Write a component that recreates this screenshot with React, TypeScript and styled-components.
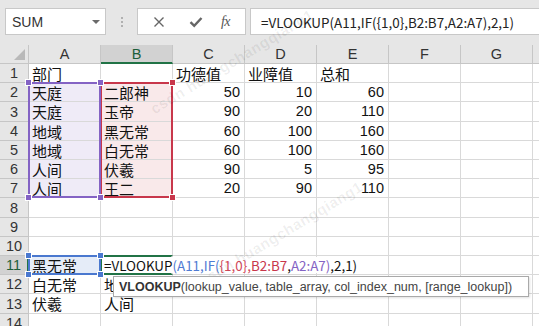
import React from 'react';
import styled, { createGlobalStyle } from 'styled-components';

const GlobalStyle = createGlobalStyle`
  html, body {
    margin: 0;
    padding: 0;
    background: #fff;
  }
  body {
    font-family: "Liberation Sans", "Noto Sans CJK SC", sans-serif;
    color: #111;
  }
`;

const GREEN = '#217346';
const BLUE = '#4a78cf';
const RED = '#c8374b';
const PURPLE = '#8463c4';

const FORMULA = '=VLOOKUP(A11,IF({1,0},B2:B7,A2:A7),2,1)';

const COLS = ['A', 'B', 'C', 'D', 'E', 'F', 'G', 'H'];
const ROW_COUNT = 14;
// rows are 19.2px apart in the shot, snap them to whole pixels
const rowHeights = Array.from(
  { length: ROW_COUNT },
  (_, i) => Math.round((i + 1) * 19.2) - Math.round(i * 19.2)
);

type CellValue = string | number | null;

const data: Record<number, CellValue[]> = {
  1: ['部门', null, '功德值', '业障值', '总和'],
  2: ['天庭', '二郎神', 50, 10, 60],
  3: ['天庭', '玉帝', 90, 20, 110],
  4: ['地域', '黑无常', 60, 100, 160],
  5: ['地域', '白无常', 60, 100, 160],
  6: ['人间', '伏羲', 90, 5, 95],
  7: ['人间', '王二', 20, 90, 110],
  11: ['黑无常'],
  12: ['白无常', '地域'],
  13: ['伏羲', '人间'],
};

const formulaParts: [string, string][] = [
  ['=VLOOKUP', '#111'],
  ['(A11,IF(', '#4f7bd3'],
  ['{1,0},', '#d2485a'],
  ['B2:B7', RED],
  [',', '#111'],
  ['A2:A7)', PURPLE],
  [',2,1)', '#111'],
];

const Page = styled.div`
  position: relative;
  width: 539px;
  height: 326px;
  overflow: hidden;
`;

/* ---------- formula bar ---------- */

const FormulaBar = styled.div`
  height: 45px;
  box-sizing: border-box;
  background: #e6e6e6;
  display: flex;
  align-items: flex-start;
  padding: 8px 0 0 5px;
`;

const NameBox = styled.div`
  width: 101px;
  height: 27px;
  box-sizing: border-box;
  background: #fff;
  border: 1px solid #c8c8c8;
  display: flex;
  align-items: center;
  justify-content: space-between;
  padding: 0 5px 0 6px;
  font-size: 14px;
  color: #333;
`;

const DropArrow = styled.span`
  width: 0;
  height: 0;
  border-left: 4px solid transparent;
  border-right: 4px solid transparent;
  border-top: 4px solid #6a6a6a;
`;

const Grip = styled.div`
  width: 31px;
  height: 27px;
  display: flex;
  flex-direction: column;
  align-items: center;
  justify-content: center;
  gap: 2px;

  span {
    width: 2px;
    height: 2px;
    background: #b0b0b0;
  }
`;

const ButtonGroup = styled.div`
  width: 109px;
  height: 27px;
  box-sizing: border-box;
  background: #fff;
  border: 1px solid #c8c8c8;
  display: grid;
  grid-template-columns: 38px 36px 1fr;
  align-items: center;
  justify-items: center;
  padding-left: 2px;
`;

const FxLabel = styled.span`
  font-family: "Liberation Serif", serif;
  font-style: italic;
  font-size: 14px;
  color: #555;
  letter-spacing: -0.5px;
  margin-right: 8px;
`;

const FormulaInput = styled.div`
  flex: 1;
  height: 27px;
  margin-left: 4px;
  box-sizing: border-box;
  background: #fff;
  border: 1px solid #c8c8c8;
  border-right: none;
  display: flex;
  align-items: center;
  padding-left: 10px;
  font-family: "Noto Sans CJK SC", sans-serif;
  font-size: 13.4px;
  color: #222;
  white-space: nowrap;
`;

/* ---------- sheet ---------- */

const Sheet = styled.div<{ $rows: string }>`
  display: grid;
  grid-template-columns: 29px repeat(8, 72px);
  grid-template-rows: ${(p) => p.$rows};
`;

const Corner = styled.div`
  grid-row: 1;
  grid-column: 1;
  background: #e6e6e6;
  border-right: 1px solid #c6c6c6;
  border-bottom: 1px solid #c6c6c6;
  position: relative;

  &::after {
    content: '';
    position: absolute;
    right: 3px;
    bottom: 3px;
    border-left: 11px solid transparent;
    border-bottom: 11px solid #b9b9b9;
  }
`;

const ColHeader = styled.div<{ $col: number; $active?: boolean }>`
  grid-row: 1;
  grid-column: ${(p) => p.$col};
  background: ${(p) => (p.$active ? '#d2d2d2' : '#e6e6e6')};
  border-right: 1px solid #c6c6c6;
  border-bottom: ${(p) => (p.$active ? `2px solid ${GREEN}` : '1px solid #c6c6c6')};
  display: flex;
  align-items: center;
  justify-content: center;
  font-size: 14.5px;
  color: ${(p) => (p.$active ? '#1d5e3a' : '#333')};
`;

const RowHeader = styled.div<{ $row: number; $active?: boolean }>`
  grid-row: ${(p) => p.$row};
  grid-column: 1;
  background: ${(p) => (p.$active ? '#d2d2d2' : '#e6e6e6')};
  border-right: ${(p) => (p.$active ? `2px solid ${GREEN}` : '1px solid #c6c6c6')};
  border-bottom: 1px solid #c6c6c6;
  display: flex;
  align-items: center;
  justify-content: center;
  font-size: 14.5px;
  color: ${(p) => (p.$active ? '#1d5e3a' : '#333')};
`;

const Cell = styled.div<{ $row: number; $col: number; $num?: boolean }>`
  grid-row: ${(p) => p.$row};
  grid-column: ${(p) => p.$col};
  border-right: 1px solid #d9d9d9;
  border-bottom: 1px solid #d9d9d9;
  display: flex;
  align-items: center;
  justify-content: ${(p) => (p.$num ? 'flex-end' : 'flex-start')};
  padding: ${(p) => (p.$num ? '0 4px 0 0' : '0 0 0 3px')};
  font-family: ${(p) =>
    p.$num ? '"Liberation Sans", sans-serif' : '"Noto Sans CJK SC", sans-serif'};
  font-size: ${(p) => (p.$num ? '14.5px' : '15px')};
  line-height: 1;
  white-space: nowrap;
  min-width: 0;
`;

const RangeFill = styled.div<{ $area: string; $color: string }>`
  grid-area: ${(p) => p.$area};
  background: ${(p) => p.$color};
`;

const RangeFrame = styled.div<{ $area: string; $color: string; $open?: string }>`
  grid-area: ${(p) => p.$area};
  margin: -1px 0 0 -1px;
  border: 2px solid ${(p) => p.$color};
  ${(p) => (p.$open ? `border-${p.$open}-color: transparent;` : '')}
  position: relative;
  pointer-events: none;
`;

const Handle = styled.span<{ $color: string; $v: 'top' | 'bottom'; $h: 'left' | 'right' }>`
  position: absolute;
  ${(p) => p.$v}: -4px;
  ${(p) => p.$h}: -4px;
  width: 5px;
  height: 5px;
  background: ${(p) => p.$color};
  border: 1px solid #fff;
  box-sizing: content-box;
  margin: -1px;
`;

const Editor = styled.div`
  grid-area: 12 / 3 / 13 / 4;
  justify-self: start;
  align-self: stretch;
  margin-top: 1px;
  margin-bottom: 2px;
  background: #fff;
  display: flex;
  align-items: center;
  padding: 0 4px 0 3px;
  font-family: "Noto Sans CJK SC", sans-serif;
  font-size: 13.4px;
  white-space: nowrap;
`;

const Watermark = styled.div<{ $x: number; $y: number }>`
  position: absolute;
  left: ${(p) => p.$x}px;
  top: ${(p) => p.$y}px;
  transform: rotate(-31deg);
  transform-origin: left bottom;
  font-family: "Liberation Sans", sans-serif;
  font-weight: bold;
  font-size: 15px;
  letter-spacing: 0.5px;
  color: rgba(0, 0, 0, 0.07);
  white-space: nowrap;
  pointer-events: none;
`;

const Tooltip = styled.div`
  position: absolute;
  left: 113px;
  top: 276px;
  width: 416px;
  height: 21px;
  box-sizing: border-box;
  background: #fff;
  border: 1px solid #a9a9a9;
  box-shadow: 1px 1px 2px rgba(0, 0, 0, 0.12);
  display: flex;
  align-items: center;
  padding-left: 5px;
  font-size: 12.5px;
  color: #444;
  white-space: nowrap;

  b {
    color: #333;
  }
`;

const CrossIcon = () => (
  <svg width="12" height="12" viewBox="0 0 12 12">
    <path d="M1.5 1.5 L10.5 10.5 M10.5 1.5 L1.5 10.5" stroke="#666" strokeWidth="1.4" fill="none" />
  </svg>
);

const CheckIcon = () => (
  <svg width="14" height="12" viewBox="0 0 14 12">
    <path d="M1.5 6.2 L5.2 9.8 L12.5 2" stroke="#666" strokeWidth="2.4" fill="none" />
  </svg>
);

const handles = (color: string, which: string[]) =>
  which.map((k) => {
    const [v, h] = k.split('-') as ['top' | 'bottom', 'left' | 'right'];
    return <Handle key={k} $color={color} $v={v} $h={h} />;
  });

const App = () => {
  const rows = `19px ${rowHeights.map((h) => `${h}px`).join(' ')}`;

  const cells: React.ReactNode[] = [];
  for (let r = 1; r <= ROW_COUNT; r++) {
    const values = data[r] || [];
    cells.push(
      <RowHeader key={`rh-${r}`} $row={r + 1} $active={r === 11}>
        {r}
      </RowHeader>
    );
    COLS.forEach((_, c) => {
      const v = values[c];
      const isEditCell = r === 11 && c === 1;
      cells.push(
        <Cell key={`c-${r}-${c}`} $row={r + 1} $col={c + 2} $num={typeof v === 'number'}>
          {isEditCell ? null : v}
        </Cell>
      );
    });
  }

  return (
    <Page>
      <GlobalStyle />
      <FormulaBar>
        <NameBox>
          SUM
          <DropArrow />
        </NameBox>
        <Grip>
          <span />
          <span />
          <span />
        </Grip>
        <ButtonGroup>
          <CrossIcon />
          <CheckIcon />
          <FxLabel>fx</FxLabel>
        </ButtonGroup>
        <FormulaInput>{FORMULA}</FormulaInput>
      </FormulaBar>

      <Sheet $rows={rows}>
        <Corner />
        {COLS.map((c, i) => (
          <ColHeader key={c} $col={i + 2} $active={c === 'B'}>
            {c}
          </ColHeader>
        ))}

        <RangeFill $area="3 / 2 / 9 / 3" $color="#efebf7" />
        <RangeFill $area="3 / 3 / 9 / 4" $color="#f9e9ea" />
        <RangeFill $area="12 / 2 / 13 / 3" $color="#e5ecf8" />

        {cells}

        <RangeFrame $area="3 / 3 / 9 / 4" $color={RED}>
          {handles(RED, ['top-right', 'bottom-right'])}
        </RangeFrame>
        <RangeFrame $area="3 / 2 / 9 / 3" $color={PURPLE}>
          {handles(PURPLE, ['top-left', 'top-right', 'bottom-left', 'bottom-right'])}
        </RangeFrame>

        <Editor>
          {formulaParts.map(([t, col], i) => (
            <span key={i} style={{ color: col }}>
              {t}
            </span>
          ))}
        </Editor>
        <RangeFrame $area="12 / 3 / 13 / 4" $color={GREEN} $open="right" />
        <RangeFrame $area="12 / 2 / 13 / 3" $color={BLUE}>
          {handles(BLUE, ['top-left', 'top-right', 'bottom-left', 'bottom-right'])}
        </RangeFrame>
      </Sheet>

      <Watermark $x={156} $y={100}>csdn huangchangqiang1</Watermark>
      <Watermark $x={205} $y={272}>csdn huangchangqiang1</Watermark>

      <Tooltip>
        <b>VLOOKUP</b>(lookup_value, table_array, col_index_num, [range_lookup])
      </Tooltip>
    </Page>
  );
};

export default App;
